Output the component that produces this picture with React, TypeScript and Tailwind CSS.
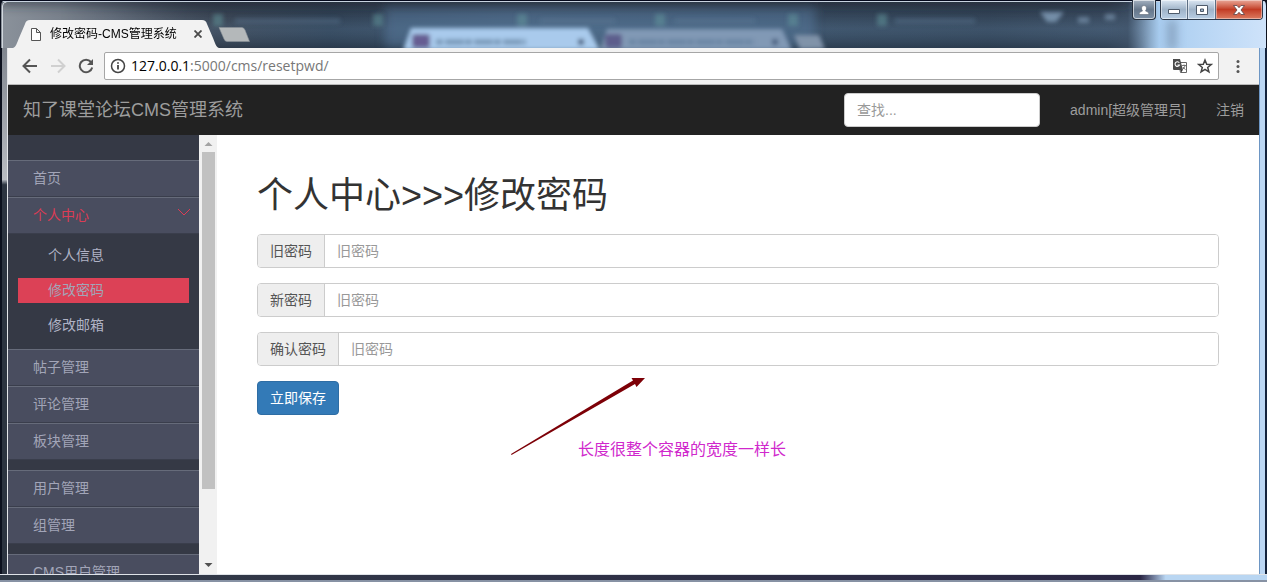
import React from "react";

type SubItem = { label: string; active?: boolean };
type MenuItem = { label: string; active?: boolean; children?: SubItem[] };

const groups: MenuItem[][] = [
  [
    { label: "首页" },
    {
      label: "个人中心",
      active: true,
      children: [
        { label: "个人信息" },
        { label: "修改密码", active: true },
        { label: "修改邮箱" },
      ],
    },
    { label: "帖子管理" },
    { label: "评论管理" },
    { label: "板块管理" },
  ],
  [{ label: "用户管理" }, { label: "组管理" }],
  [{ label: "CMS用户管理" }],
];

const fields = [
  { id: "oldpwd", label: "旧密码", placeholder: "旧密码" },
  { id: "newpwd", label: "新密码", placeholder: "旧密码" },
  { id: "newpwd2", label: "确认密码", placeholder: "旧密码" },
];

function GlassBackdrop() {
  return (
    <svg
      className="absolute inset-0 h-full w-full"
      viewBox="0 0 1267 48"
      preserveAspectRatio="none"
      aria-hidden="true"
    >
      <defs>
        <linearGradient id="glass" x1="0" x2="1" y1="0" y2="0">
          <stop offset="0" stopColor="#8b929b" />
          <stop offset="0.09" stopColor="#69727f" />
          <stop offset="0.17" stopColor="#414b59" />
          <stop offset="0.26" stopColor="#34465a" />
          <stop offset="0.4" stopColor="#43586f" />
          <stop offset="0.6" stopColor="#3c5167" />
          <stop offset="0.78" stopColor="#37495d" />
          <stop offset="0.89" stopColor="#41546a" />
          <stop offset="0.915" stopColor="#a9cdf0" />
          <stop offset="1" stopColor="#cfe3fa" />
        </linearGradient>
        <linearGradient id="shade" x1="0" x2="0" y1="0" y2="1">
          <stop offset="0" stopColor="#262b38" stopOpacity="0.75" />
          <stop offset="0.35" stopColor="#2c3a4c" stopOpacity="0.3" />
          <stop offset="0.6" stopColor="#51708e" stopOpacity="0.25" />
          <stop offset="1" stopColor="#1c2a3a" stopOpacity="0.45" />
        </linearGradient>
        <linearGradient id="fade" x1="0" x2="1" y1="0" y2="0">
          <stop offset="0" stopColor="#fff" stopOpacity="0" />
          <stop offset="0.12" stopColor="#fff" />
          <stop offset="0.96" stopColor="#fff" />
          <stop offset="1" stopColor="#fff" stopOpacity="0" />
        </linearGradient>
        <mask id="shadeMask">
          <rect x="60" width="1090" height="48" fill="url(#fade)" />
        </mask>
        <filter id="soft" x="-20%" y="-50%" width="140%" height="200%">
          <feGaussianBlur stdDeviation="2" />
        </filter>
        <filter id="softer" x="-20%" y="-50%" width="140%" height="200%">
          <feGaussianBlur stdDeviation="5" />
        </filter>
      </defs>
      <rect width="1267" height="48" fill="url(#glass)" />
      <rect x="60" width="1090" height="48" fill="url(#shade)" mask="url(#shadeMask)" />
      <g filter="url(#softer)">
        <rect x="385" y="9" width="430" height="38" fill="#58789a" opacity="0.55" />
        <rect x="0" y="-6" width="1130" height="12" fill="#2a2f3d" opacity="0.55" />
        <rect x="1168" y="20" width="8" height="30" fill="#7188a4" opacity="0.7" />
      </g>
      <g filter="url(#soft)">
        <path d="M403 50 L411 28 L588 28 L600 50Z" fill="#a9caec" />
        <path d="M600 50 L607 29 L782 29 L792 50Z" fill="#8199b5" />
        <path d="M794 35h25l6 14h-25z" fill="#8093a9" />
        <rect x="412" y="34" width="18" height="14" rx="3" fill="#665d92" />
        <rect x="605" y="34" width="17" height="14" rx="3" fill="#5d5d8c" />
        <path d="M436 42h90M629 42h126" stroke="#5f7c9c" strokeWidth="6" strokeDasharray="7 2 19 1" opacity="0.6" />
        <path d="M581 39v6M775 39v6" stroke="#496080" strokeWidth="6" />
        <g fill="#62979d" opacity="0.5">
          <rect x="213" y="14" width="10" height="12" />
          <rect x="373" y="14" width="10" height="12" />
          <rect x="517" y="14" width="10" height="12" />
          <rect x="655" y="14" width="10" height="12" />
          <rect x="788" y="14" width="10" height="12" />
          <rect x="877" y="14" width="10" height="12" />
        </g>
        <path d="M235 21h105M540 21h75M675 21h80M895 21h80" stroke="#607d98" strokeWidth="5" opacity="0.4" />
        <path d="M1040 12h24l-8 10h-9z" fill="#8eacc9" opacity="0.7" />
        <path d="M1078 20h11M1105 17h10" stroke="#91aeca" strokeWidth="6" opacity="0.5" />
      </g>
      <rect width="1267" height="1" fill="#05091c" />
      <rect y="1" width="1267" height="1" fill="#c8d2df" />
      <path d="M0 0h5q-4 1-4 6v42H0z" fill="#0b101d" />
      <path d="M2.500 48V6q0-4 4-4" fill="none" stroke="#d2d8df" />
      <path d="M1267 0h-4q3 1 3 6v42h1z" fill="#0b101d" />
    </svg>
  );
}

function TitleBar() {
  return (
    <header className="relative flex h-12 shrink-0 justify-between">
      <GlassBackdrop />
      <div className="relative flex min-w-0 items-end pl-3">
        <div className="relative flex h-7 w-[208px] items-center gap-2 pr-[18px] pl-[18px]">
          <svg className="absolute inset-0 h-full w-full" viewBox="0 0 208 28" aria-hidden="true">
            <path d="M1 28 C4 27 5 23 7 18 L13 4 Q14 0 18 0 H190 Q194 0 195 4 L201 18 C203 23 204 27 207 28Z" fill="#f2f2f2" />
          </svg>
          <svg className="relative h-[15px] w-3 shrink-0" viewBox="0 0 12 15" fill="#fff" stroke="#555" aria-hidden="true">
            <path d="M1.500 1.500h5l4 4v8h-9zM6.500 1.500v4h4" />
          </svg>
          <span className="relative grow text-xs whitespace-nowrap text-black">修改密码-CMS管理系统</span>
          <button type="button" aria-label="关闭标签页" className="relative shrink-0">
            <svg className="h-2 w-2" viewBox="0 0 8 8" stroke="#4a4a4a" strokeWidth="1.800">
              <path d="M.5.5l7 7M7.500.5l-7 7" />
            </svg>
          </button>
        </div>
        <button type="button" aria-label="新建标签页" className="mb-1.5 -ml-0.5">
          <svg className="h-[15px] w-8" viewBox="0 0 32 15">
            <path d="M1 .5H24Q26 .5 27 3L31.500 14.500H9Q7 14.500 6 12Z" fill="#b4b8ba" stroke="#8b9298" strokeWidth=".6" />
          </svg>
        </button>
      </div>
      <div className="relative mr-1 flex h-5 shrink-0 gap-1">
        <button
          type="button"
          aria-label="用户"
          className="flex w-6 items-center justify-center rounded-b-[4px] border border-t-0 border-[#26303e] bg-linear-to-b from-[#a5b2c1] via-[#66778b] to-[#7c90a6] ring-1 ring-white/60 ring-inset"
        >
          <svg className="h-3 w-3" viewBox="0 0 12 12" fill="#fff" stroke="#4e5866" strokeWidth=".5">
            <path d="M1 10.500Q1 7.500 4.500 7Q3.500 5.500 3.500 4Q3.500 1.500 6 1.500T8.500 4Q8.500 5.500 7.500 7Q11 7.500 11 10.500Z" />
          </svg>
        </button>
        <div className="flex overflow-hidden rounded-b-[4px] border border-t-0 border-[#2d394a]">
          <button
            type="button"
            aria-label="最小化"
            className="flex w-[27px] items-center justify-center border-r border-[#5c6e83] bg-linear-to-b from-[#dce7f3] via-[#9fb3c8] to-[#b9cfe5] ring-1 ring-white/50 ring-inset"
          >
            <svg className="h-3 w-3" viewBox="0 0 12 12">
              <path d="M.5 5.500h11v4H.5z" fill="#fff" stroke="#4e5b6b" />
            </svg>
          </button>
          <button
            type="button"
            aria-label="最大化"
            className="flex w-7 items-center justify-center border-r border-[#5c6e83] bg-linear-to-b from-[#dce7f3] via-[#9fb3c8] to-[#b9cfe5] ring-1 ring-white/50 ring-inset"
          >
            <svg className="h-3 w-3" viewBox="0 0 12 12">
              <path d="M.5 1.500h11v9H.5zM4.500 5v2.500h3V5z" fill="#fff" fillRule="evenodd" stroke="#4e5b6b" />
            </svg>
          </button>
          <button
            type="button"
            aria-label="关闭"
            className="flex w-[46px] items-center justify-center bg-linear-to-b from-[#e8a697] via-[#c23b24] to-[#dc7a5f] ring-1 ring-white/40 ring-inset"
          >
            <svg className="h-3 w-3" viewBox="0 0 12 12">
              <path d="M.5 1.500h3.500L6 3.700 8 1.500h3.500L8 6l3.500 4.500H8L6 8.300 4 10.500H.5L4 6z" fill="#fff" stroke="#5b4146" strokeWidth=".8" />
            </svg>
          </button>
        </div>
      </div>
    </header>
  );
}

function AddressBar() {
  return (
    <div className="flex h-[37px] shrink-0 items-center border-b border-[#b9b9b9] bg-[#f2f2f2] pr-[18px] pl-3.5">
      <div className="flex shrink-0 items-center gap-3">
        <button type="button" aria-label="后退">
          <svg className="h-4 w-4" viewBox="0 0 16 16" fill="none" stroke="#555" strokeWidth="2">
            <path d="M15 8H2M8 1.500L1.500 8L8 14.500" />
          </svg>
        </button>
        <button type="button" aria-label="前进">
          <svg className="h-4 w-4" viewBox="0 0 16 16" fill="none" stroke="#d0d0d0" strokeWidth="2">
            <path d="M1 8h13M8 1.500L14.500 8L8 14.500" />
          </svg>
        </button>
        <button type="button" aria-label="刷新">
          <svg className="h-4 w-4" viewBox="0 0 16 16" fill="none" stroke="#555" strokeWidth="2">
            <path d="M13 4A6.300 6.300 0 1 0 14.200 9.500" />
            <path d="M15 1v6H9z" fill="#555" stroke="none" />
          </svg>
        </button>
      </div>
      <div className="ml-2.5 flex h-7 min-w-0 grow items-center gap-[5px] rounded-[2px] border border-[#a6a6a6] bg-white px-[5px]">
        <svg className="h-4 w-4 shrink-0" viewBox="0 0 16 16" fill="none" stroke="#444" strokeWidth="1.500" aria-hidden="true">
          <circle cx="8" cy="8" r="6.500" />
          <path d="M8 7v4.500M8 4.200v1.600" strokeWidth="1.800" />
        </svg>
        <div className="grow truncate font-['Open_Sans',sans-serif] text-sm text-[#777]">
          <span className="text-black">127.0.0.1</span>:5000/cms/resetpwd/
        </div>
        <button type="button" aria-label="翻译此页" className="shrink-0">
          <svg className="h-4 w-4" viewBox="0 0 16 16">
            <path d="M6.500 4.500h8v10h-6z" fill="#fff" stroke="#666" />
            <path d="M1 1h7l3 11H2Q1 12 1 11z" fill="#4c4c4c" />
            <path d="M7.300 4.800A2.300 2.300 0 1 0 7.500 7H5.500" fill="none" stroke="#fff" strokeWidth="1.100" />
            <path d="M10 7.500h4M12 6.500v1M13.200 7.500Q12.500 10 10.500 11.500M11 9l2.500 2.800" fill="none" stroke="#666" strokeWidth=".9" />
            <path d="M8.500 12h2.300l-1.600 2.500z" fill="#333" />
          </svg>
        </button>
        <button type="button" aria-label="收藏此页" className="ml-1 shrink-0">
          <svg className="h-4 w-4" viewBox="0 0 16 16" fill="none" stroke="#444" strokeWidth="1.500">
            <path d="M8 2l1.700 4.200 4.500.3-3.500 2.900 1.200 4.400L8 11.300l-3.900 2.500 1.200-4.400L1.800 6.500l4.500-.3z" />
          </svg>
        </button>
      </div>
      <button type="button" aria-label="菜单" className="ml-4 shrink-0">
        <svg className="h-4 w-1.5" viewBox="0 0 6 16" fill="#555">
          <circle cx="3" cy="3.500" r="1.500" />
          <circle cx="3" cy="8.500" r="1.500" />
          <circle cx="3" cy="13.500" r="1.500" />
        </svg>
      </button>
    </div>
  );
}

function NavBar() {
  return (
    <nav className="flex h-[50px] shrink-0 items-center justify-between bg-[#222] pr-[15px] pl-[15px] text-[#9d9d9d]">
      <a href="#home" className="text-lg whitespace-nowrap">
        知了课堂论坛CMS管理系统
      </a>
      <div className="flex shrink-0 items-center gap-[30px]">
        <input
          type="text"
          aria-label="查找"
          placeholder="查找..."
          className="h-[34px] w-[196px] rounded-[4px] border border-[#ccc] bg-white px-3 text-sm text-[#555] placeholder:text-[#999]"
        />
        <a href="#profile" className="text-sm">
          admin[超级管理员]
        </a>
        <a href="#logout" className="text-sm">
          注销
        </a>
      </div>
    </nav>
  );
}

function Sidebar() {
  return (
    <aside className="flex w-[209px] shrink-0">
      <nav className="flex min-w-0 grow flex-col gap-2.5 overflow-hidden bg-[#353945] pt-[25px] text-sm">
        {groups.map((group, index) => (
          <ul key={index} className="shrink-0">
            {group.map((item) => (
              <li key={item.label}>
                <a
                  href="#menu"
                  className={
                    item.active
                      ? "flex h-[37px] items-center justify-between border-t border-b border-t-[#666b7a] border-b-[#3a3e4c] bg-[#494d5f] pr-2 pb-0.5 pl-[25px] text-[#dc3c55]"
                      : "flex h-[37px] items-center justify-between border-t border-b border-t-[#666b7a] border-b-[#3a3e4c] bg-[#494d5f] pr-2 pb-0.5 pl-[25px] text-[#a2a5b8]"
                  }
                >
                  {item.label}
                  {item.children && (
                    <svg className="mb-1.5 h-2 w-3.5" viewBox="0 0 14 8" fill="none" stroke="#dc3c55" aria-hidden="true">
                      <path d="M1 1l6 6 6-6" />
                    </svg>
                  )}
                </a>
                {item.children && (
                  <ul className="flex flex-col gap-2.5 px-2.5 pt-[9px] pb-[11px]">
                    {item.children.map((child) => (
                      <li key={child.label}>
                        <a
                          href="#submenu"
                          className={
                            child.active
                              ? "block bg-[#dc4156] pl-[30px] leading-[25px] text-[#a2a5b8]"
                              : "block pl-[30px] leading-[25px] text-[#b0b3c5]"
                          }
                        >
                          {child.label}
                        </a>
                      </li>
                    ))}
                  </ul>
                )}
              </li>
            ))}
          </ul>
        ))}
      </nav>
      <div className="flex w-[18px] shrink-0 flex-col items-center bg-[#f1f1f1]" aria-hidden="true">
        <svg className="h-[17px] w-[17px] shrink-0" viewBox="0 0 17 17">
          <path d="M4.500 11h8l-4-4z" fill="#a3a3a3" />
        </svg>
        <div className="w-[13px] grow-[337] bg-[#c1c1c1]" />
        <div className="grow-[68]" />
        <svg className="h-[17px] w-[17px] shrink-0" viewBox="0 0 17 17">
          <path d="M4.500 6h8l-4 4z" fill="#505050" />
        </svg>
      </div>
    </aside>
  );
}

function ResetPassword() {
  return (
    <main className="relative min-w-0 grow overflow-hidden bg-white px-10 pt-10">
      <h1 className="mb-[18px] text-4xl leading-[41px] text-[#333]">个人中心&gt;&gt;&gt;修改密码</h1>
      <form className="flex flex-col items-start gap-[15px] text-sm" onSubmit={(event) => event.preventDefault()}>
        {fields.map((field) => (
          <div key={field.id} className="flex h-[34px] w-full overflow-hidden rounded-[4px] border border-[#ccc]">
            <label
              htmlFor={field.id}
              className="flex shrink-0 items-center border-r border-[#ccc] bg-[#eee] px-3 text-[#555]"
            >
              {field.label}
            </label>
            <input
              id={field.id}
              type="password"
              placeholder={field.placeholder}
              className="min-w-0 grow bg-white px-3 text-[#555] placeholder:text-[#999]"
            />
          </div>
        ))}
        <button type="submit" className="h-[34px] rounded-[4px] border border-[#2e6da4] bg-[#337ab7] px-3 text-white">
          立即保存
        </button>
      </form>
      <svg className="absolute top-[241px] left-[293px] h-20 w-[138px]" viewBox="0 0 138 80" fill="#7d0007" aria-hidden="true">
        <path d="M1 78L123 4.500 121.500 2 135 2 126.500 11 125 8 1.500 79z" />
      </svg>
      <p className="absolute top-[303px] left-[361px] text-base whitespace-nowrap text-[#d028cc]">
        长度很整个容器的宽度一样长
      </p>
    </main>
  );
}

export default function App() {
  return (
    <div className="flex h-screen flex-col overflow-hidden bg-[#141b2b] font-['Liberation_Sans','Noto_Sans_CJK_SC',sans-serif]">
      <TitleBar />
      <div className="flex min-h-0 grow">
        <div className="w-2 shrink-0 border-r border-l-2 border-r-[#e3e5e9] border-l-[#0b101d] bg-linear-to-b from-[#80868f] from-0% via-[#b9bcc2] via-25% to-[#2c3440] to-26%" />
        <div className="flex min-w-0 grow flex-col">
          <AddressBar />
          <NavBar />
          <div className="flex min-h-0 grow">
            <Sidebar />
            <ResetPassword />
          </div>
        </div>
        <div className="w-2 shrink-0 border-r-2 border-l border-r-[#14233b] border-l-[#6d96c4] bg-[#bcd7f3]" />
      </div>
      <div className="h-2 shrink-0 border-t border-b-2 border-t-[#dfe3e8] border-b-[#8792a4] bg-linear-to-r from-[#333c48] from-0% via-[#2b2745] via-90% to-[#b9d6f2] to-92%" />
    </div>
  );
}
